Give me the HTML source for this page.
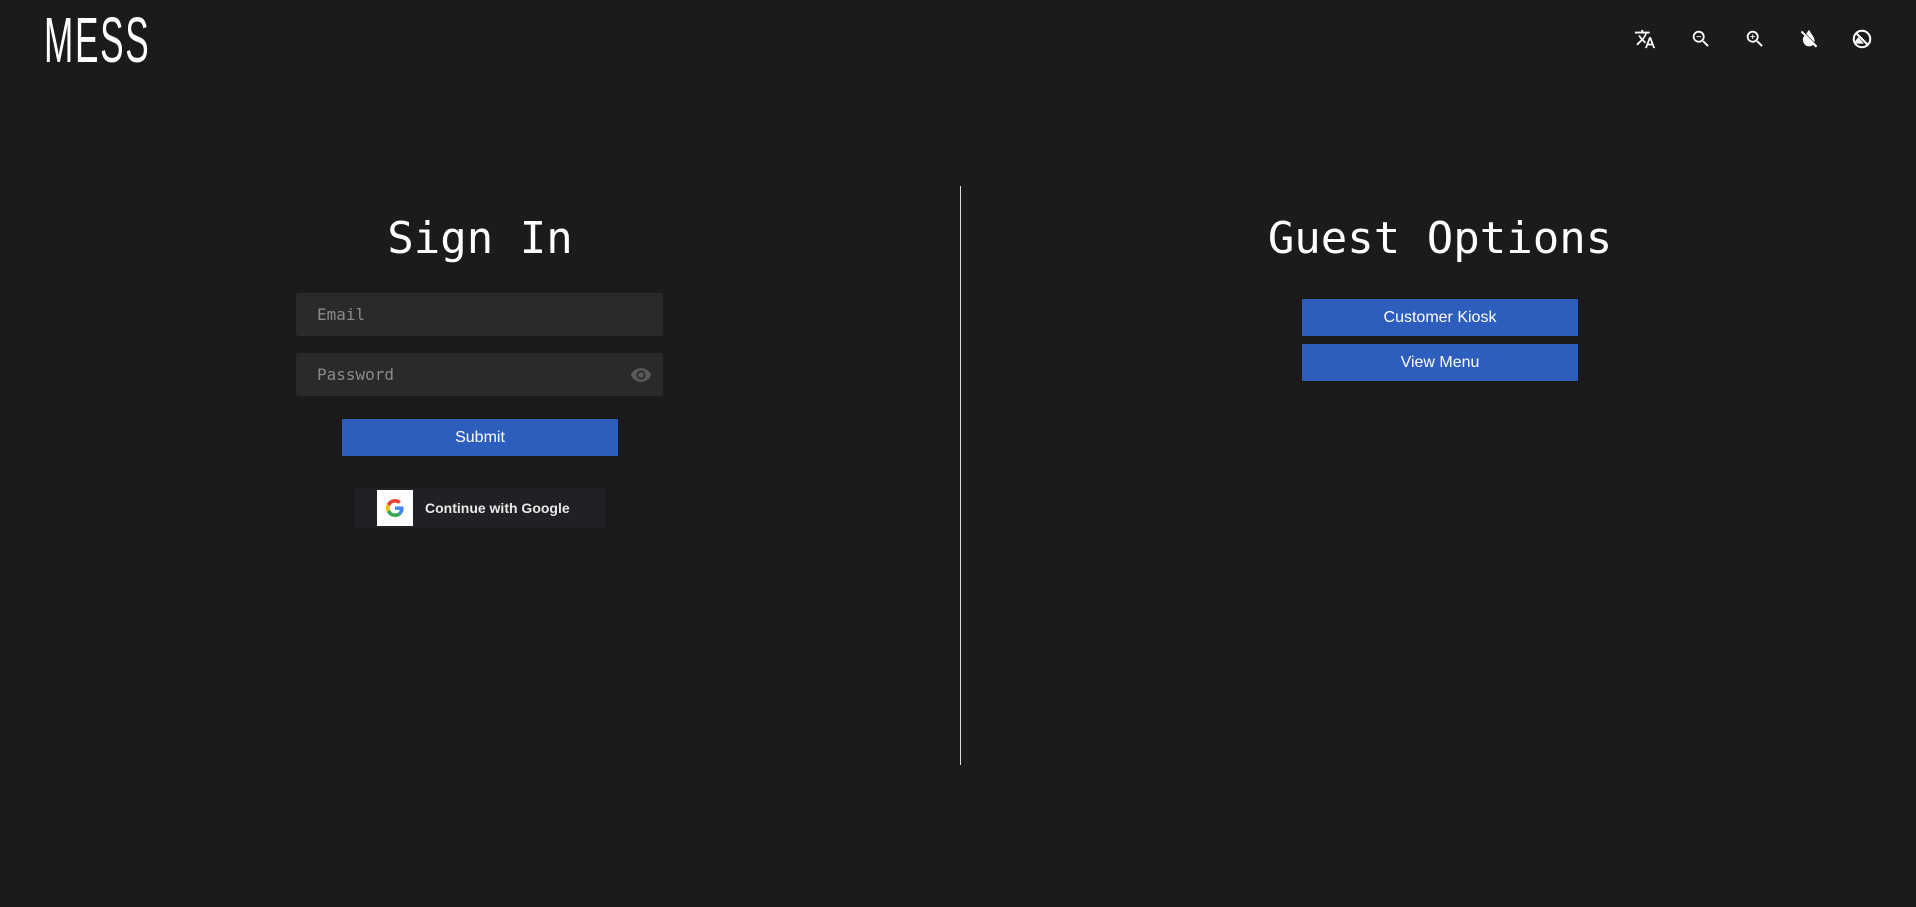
<!DOCTYPE html>
<html><head><meta charset="utf-8"><style>
body{margin:0;width:1916px;height:907px;background:#1b1b1b;position:relative;overflow:hidden;font-family:"Liberation Sans",sans-serif;color:#fff}
.abs{position:absolute}
.title{font-family:"DejaVu Sans Mono","Liberation Mono",monospace;font-size:44px;text-align:center;width:600px;line-height:50px}
.inp{background:#2a2a2c;border-radius:3px;width:367px;height:43px;left:296px;font-family:"DejaVu Sans Mono",monospace;font-size:16px;color:#8a8a8a;line-height:43px;padding-left:21px;box-sizing:border-box}
.btn{background:#2d5dbd;color:#fff;font-size:16px;text-align:center;width:276px;height:37px;line-height:37px}
.ic{top:28px;width:22px;height:22px}
</style></head><body>
<div class="abs" style="left:44px;top:8px;font-family:'Liberation Sans Narrow','Liberation Sans',sans-serif;font-size:64px;font-weight:normal;letter-spacing:3px;transform:scaleX(0.55);transform-origin:left;line-height:64px">MESS</div>

<svg class="abs ic" style="left:1634px" viewBox="0 0 24 24" fill="#fff"><path d="M12.87 15.07l-2.54-2.51.03-.03A17.5 17.5 0 0014.07 6H17V4h-7V2H8v2H1v2h11.17C11.5 7.92 10.44 9.75 9 11.35 8.07 10.32 7.3 9.19 6.69 8h-2c.73 1.63 1.73 3.17 2.98 4.56l-5.09 5.02L4 19l5-5 3.11 3.11.76-2.04zM18.5 10h-2L12 22h2l1.12-3h4.75L21 22h2l-4.5-12zm-2.62 7l1.62-4.33L19.12 17h-3.24z"/></svg>
<svg class="abs ic" style="left:1690px" viewBox="0 0 24 24" fill="#fff"><path d="M15.5 14h-.79l-.28-.27A6.47 6.47 0 0016 9.5 6.5 6.5 0 109.5 16c1.61 0 3.09-.59 4.23-1.57l.27.28v.79l5 4.99L20.49 19l-4.99-5zm-6 0C7.01 14 5 11.99 5 9.5S7.01 5 9.5 5 14 7.01 14 9.5 11.99 14 9.5 14zM7 9h5v1H7z"/></svg>
<svg class="abs ic" style="left:1744px" viewBox="0 0 24 24" fill="#fff"><path d="M15.5 14h-.79l-.28-.27A6.47 6.47 0 0016 9.5 6.5 6.5 0 109.5 16c1.61 0 3.09-.59 4.23-1.57l.27.28v.79l5 4.99L20.49 19l-4.99-5zm-6 0C7.01 14 5 11.99 5 9.5S7.01 5 9.5 5 14 7.01 14 9.5 11.99 14 9.5 14zm2.5-4h-2v2H9v-2H7V9h2V7h1v2h2v1z"/></svg>
<svg class="abs ic" style="left:1798px" viewBox="0 0 24 24" fill="#fff"><path d="M21 19.5L4.5 3 3 4.5l4 4A7 7 0 0012 20a7 7 0 004.5-1.6l3 3zM12 2L8.8 6.4 17.9 15.5A7 7 0 0017.3 10.5z"/></svg>
<svg class="abs ic" style="left:1851px" viewBox="0 0 24 24" fill="none" stroke="#fff" stroke-width="2.2"><circle cx="12" cy="12" r="9"/><path d="M5.6 5.6l12.8 12.8"/><path d="M4 15l4-5 6 7H5z" fill="#fff" stroke="none"/></svg>

<div class="abs title" style="left:180px;top:214px">Sign In</div>
<div class="abs inp" style="top:293px">Email</div>
<div class="abs inp" style="top:353px">Password</div>
<svg class="abs" style="left:630px;top:364px" width="22" height="22" viewBox="0 0 24 24" fill="#5a5a5c"><path d="M12 4.5C7 4.5 2.73 7.61 1 12c1.73 4.39 6 7.5 11 7.5s9.27-3.11 11-7.5c-1.73-4.39-6-7.5-11-7.5zM12 17a5 5 0 110-10 5 5 0 010 10zm0-8a3 3 0 100 6 3 3 0 000-6z"/></svg>
<div class="abs btn" style="left:342px;top:419px">Submit</div>
<div class="abs" style="left:355px;top:488px;width:250px;height:40px;background:#202124;border-radius:3px">
<div class="abs" style="left:22px;top:2px;width:36px;height:36px;background:#fff"></div>
<svg class="abs" style="left:31px;top:11px" width="18" height="18" viewBox="0 0 48 48"><path fill="#EA4335" d="M24 9.5c3.54 0 6.71 1.22 9.21 3.6l6.85-6.85C35.9 2.38 30.47 0 24 0 14.62 0 6.51 5.38 2.56 13.22l7.98 6.19C12.43 13.72 17.74 9.5 24 9.5z"/><path fill="#4285F4" d="M46.98 24.55c0-1.57-.15-3.09-.38-4.55H24v9.02h12.94c-.58 2.96-2.26 5.48-4.78 7.18l7.73 6c4.51-4.18 7.09-10.36 7.09-17.65z"/><path fill="#FBBC05" d="M10.53 28.59c-.48-1.45-.76-2.99-.76-4.59s.27-3.14.76-4.59l-7.98-6.19C.92 16.46 0 20.12 0 24c0 3.88.92 7.54 2.56 10.78l7.97-6.19z"/><path fill="#34A853" d="M24 48c6.48 0 11.93-2.13 15.89-5.81l-7.73-6c-2.15 1.45-4.92 2.3-8.16 2.3-6.26 0-11.57-4.22-13.470-9.910l-7.98 6.19C6.51 42.62 14.62 48 24 48z"/></svg>
<div class="abs" style="left:70px;top:0;line-height:40px;font-size:14px;font-weight:bold;color:#e8e8e8">Continue with Google</div>
</div>

<div class="abs" style="left:960px;top:186px;width:1px;height:579px;background:#ddd"></div>

<div class="abs title" style="left:1140px;top:214px">Guest Options</div>
<div class="abs btn" style="left:1302px;top:299px">Customer Kiosk</div>
<div class="abs btn" style="left:1302px;top:344px">View Menu</div>
</body></html>
